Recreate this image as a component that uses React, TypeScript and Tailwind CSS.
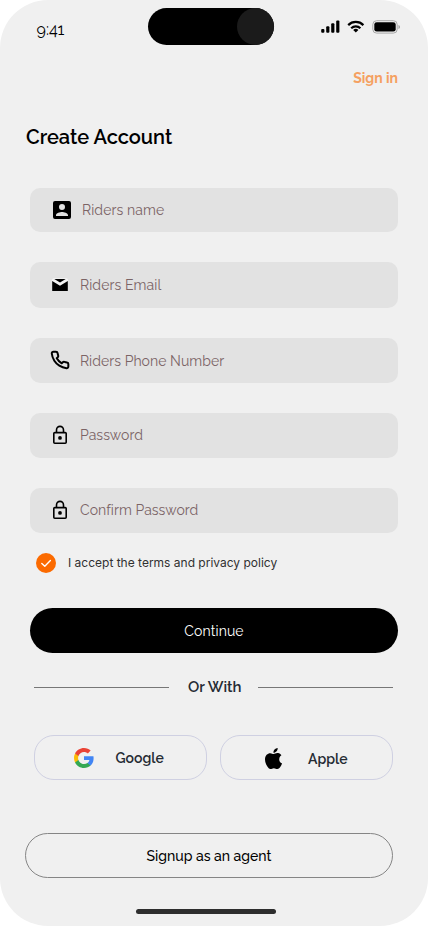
import React from "react";

type LabelProps = { children: React.ReactNode; className?: string };

function Label({ children, className = "" }: LabelProps) {
  return <span className={`block whitespace-nowrap font-['Raleway','Lato',sans-serif] ${className}`}>{children}</span>;
}

function StatusIcons() {
  return (
    <svg width="80" height="16" viewBox="0 0 80 16" fill="black">
      <rect x="0.2" y="9" width="3.2" height="3.8" rx="1" />
      <rect x="5.2" y="6.3" width="3.2" height="6.5" rx="1" />
      <rect x="10.2" y="3.3" width="3.2" height="9.5" rx="1" />
      <rect x="15.2" y="0.6" width="3.2" height="12.2" rx="1" />
      <g fill="none" stroke="black" strokeWidth="2.2">
        <path d="M27.2 5.1a10.8 10.8 0 0 1 15.2 0" />
        <path d="M30.2 8.3a6.6 6.6 0 0 1 9.2 0" />
      </g>
      <path d="M32.2 10a3.6 3.6 0 0 1 5.2 0L34.8 12.6Z" />
      <rect x="51.8" y="0.7" width="24.4" height="12.4" rx="3.8" fill="none" stroke="#a8a8a8" />
      <rect x="53.3" y="2.2" width="21.4" height="9.4" rx="2.4" />
      <path d="M77.5 5v4c.8-.3 1.4-1.1 1.4-2s-.6-1.7-1.4-2Z" fill="#9c9c9c" />
    </svg>
  );
}

function PersonIcon() {
  return (
    <svg width="24" height="24" viewBox="0 0 24 24">
      <path d="M3 5v14a2 2 0 0 0 2 2h14a2 2 0 0 0 2-2V5a2 2 0 0 0-2-2H5a2 2 0 0 0-2 2Zm12 4a3 3 0 1 1-6 0 3 3 0 0 1 6 0Zm-9 8c0-2 4-3.1 6-3.1s6 1.1 6 3.1v1H6v-1Z" />
    </svg>
  );
}

function MailIcon() {
  return (
    <svg width="20" height="20" viewBox="0 0 20 20">
      <path d="M1.9 7.5V5.2c0-1.2.9-2 2-2h12.2c1.1 0 2 .8 2 2v2.3L10 11.5Z" fill="#f4f4f4" />
      <path d="M4.3 4h11.4L10 7.4Z" />
      <path d="M2.2 6 10 10.7 17.8 6v9.9H2.2Z" />
    </svg>
  );
}

function PhoneIcon() {
  return (
    <svg className="-mt-px" width="20" height="20" viewBox="0 0 24 24" fill="none" stroke="black" strokeWidth="2.4" strokeLinecap="round" strokeLinejoin="round">
      <path d="M22 16.92v3a2 2 0 0 1-2.18 2 19.79 19.79 0 0 1-8.63-3.07 19.5 19.5 0 0 1-6-6 19.79 19.79 0 0 1-3.07-8.67A2 2 0 0 1 4.11 2h3a2 2 0 0 1 2 1.72c.13.96.36 1.9.7 2.81a2 2 0 0 1-.45 2.11L8.09 9.91a16 16 0 0 0 6 6l1.27-1.27a2 2 0 0 1 2.11-.45c.91.34 1.85.57 2.81.7A2 2 0 0 1 22 16.92Z" />
    </svg>
  );
}

function LockIcon() {
  return (
    <svg className="-mt-px" width="20" height="20" viewBox="0 0 20 20" fill="none" stroke="black" strokeWidth="1.6">
      <rect x="3.8" y="7.6" width="12.4" height="10.6" rx="1" />
      <path d="M6.5 7.6V4.9a3.5 3.5 0 0 1 7 0v2.7" />
      <circle cx="10" cy="12.9" r="1.9" fill="black" stroke="none" />
    </svg>
  );
}

function GoogleIcon() {
  return (
    <svg width="20" height="20" viewBox="2 2 44 44">
      <path fill="#4285F4" d="M45.12 24.5c0-1.56-.14-3.06-.4-4.5H24v8.51h11.84c-.51 2.75-2.06 5.08-4.39 6.64v5.52h7.11c4.16-3.83 6.56-9.47 6.56-16.17z" />
      <path fill="#34A853" d="M24 46c5.94 0 10.92-1.97 14.56-5.33l-7.11-5.52c-1.97 1.32-4.49 2.1-7.45 2.1-5.73 0-10.58-3.87-12.31-9.07H4.34v5.7C7.96 41.07 15.4 46 24 46z" />
      <path fill="#FBBC05" d="M11.69 28.18C11.25 26.86 11 25.45 11 24s.25-2.86.69-4.18v-5.7H4.34A21.99 21.99 0 0 0 2 24c0 3.55.85 6.91 2.34 9.88l7.35-5.7z" />
      <path fill="#EA4335" d="M24 10.75c3.23 0 6.13 1.11 8.41 3.29l6.31-6.31C34.91 4.18 29.93 2 24 2 15.4 2 7.96 6.93 4.34 14.12l7.35 5.7c1.73-5.2 6.58-9.07 12.31-9.07z" />
    </svg>
  );
}

function AppleIcon() {
  return (
    <svg className="mt-px" width="17" height="21" viewBox="0 0 814 1000" preserveAspectRatio="none">
      <path d="M788.1 340.9c-5.8 4.5-108.2 62.2-108.2 190.5 0 148.4 130.3 200.9 134.2 202.2-.6 3.2-20.7 71.9-68.7 141.9-42.8 61.6-87.5 123.1-155.5 123.1s-85.5-39.5-164-39.5c-76.5 0-103.7 40.8-165.9 40.8s-105.6-57-155.5-127C46.7 790.7 0 663 0 541.8c0-194.4 126.4-297.5 250.8-297.5 66.1 0 121.2 43.4 162.7 43.4 39.5 0 101.1-46 176.3-46 28.5 0 130.9 2.6 198.3 99.2zm-234-181.5c31.1-36.9 53.1-88.1 53.1-139.3 0-7.1-.6-14.3-1.9-20.1-50.6 1.9-110.8 33.7-147.1 75.8-28.5 32.4-55.1 83.6-55.1 135.5 0 7.8 1.3 15.6 1.9 18.1 3.2.6 8.4 1.3 13.6 1.3 45.4 0 102.5-30.4 135.5-71.3z" />
    </svg>
  );
}

type FieldProps = { icon: React.ReactNode; label: string; box: string; text: string };

const fields: FieldProps[] = [
  { icon: <PersonIcon />, label: "Riders name", box: "h-11 pl-5 gap-2", text: "tracking-[0.1px]" },
  { icon: <MailIcon />, label: "Riders Email", box: "h-[46px] pl-5 gap-[10px]", text: "tracking-[0.1px]" },
  { icon: <PhoneIcon />, label: "Riders Phone Number", box: "h-[45px] pl-5 gap-[10px]", text: "tracking-[0.05px]" },
  { icon: <LockIcon />, label: "Password", box: "h-[45px] pl-5 gap-[10px]", text: "-mt-px tracking-[0.05px]" },
  { icon: <LockIcon />, label: "Confirm Password", box: "h-[45px] pl-5 gap-[10px]", text: "-mt-px tracking-[0.05px]" },
];

function Field({ icon, label, box, text }: FieldProps) {
  return (
    <div className={`flex items-center rounded-[10px] bg-[#e2e2e2] ${box}`}>
      {icon}
      <Label className={`text-sm leading-5 text-[#7b6466] ${text}`}>{label}</Label>
    </div>
  );
}

export default function App() {
  return (
    <main className="h-[926px] w-[428px] overflow-hidden bg-white">
      <div className="flex h-full flex-col rounded-[48px] bg-[#f0f0f0]">
        <header className="flex h-[60px] items-start">
          <Label className="ml-[36.5px] mt-[18px] w-[111.8px] text-base leading-6">9:41</Label>
          <div className="mt-2 flex h-[37px] w-[125.4px] justify-end rounded-full bg-black">
            <div className="size-[37px] rounded-full bg-[#1b1b1b]" />
          </div>
          <div className="ml-[47.3px] mt-5"><StatusIcons /></div>
        </header>

        <div className="mr-[30px] mt-2 flex justify-end">
          <Label className="text-sm leading-5 font-bold text-[#f5a061]">Sign in</Label>
        </div>
        <h1 className="ml-[26px] mt-[34px]">
          <Label className="text-xl leading-[30px] font-semibold">Create Account</Label>
        </h1>

        <section className="mx-[30px] mt-9 flex flex-col gap-[30px]">
          {fields.map((field) => <Field key={field.label} {...field} />)}
        </section>

        <div className="ml-9 mt-5 flex h-5 items-center gap-3">
          <div className="flex size-5 items-center justify-center rounded-full bg-[#fb6a00]">
            <svg width="20" height="20" viewBox="0 0 20 20" fill="none" stroke="white" strokeWidth="1.4" strokeLinecap="round" strokeLinejoin="round"><path d="m5.8 10.4 3 2.8 5.6-5.6" /></svg>
          </div>
          <span className="whitespace-nowrap font-['Inter',sans-serif] text-xs leading-5 text-[#303030]">I accept the terms and privacy policy</span>
        </div>

        <button className="mx-[30px] mt-[35px] flex h-[45px] items-center justify-center rounded-full bg-black text-white">
          <Label className="text-sm leading-5 tracking-[0.1px]">Continue</Label>
        </button>

        <div className="ml-[34px] mr-[35px] mt-[22px] flex h-6 items-center">
          <div className="h-px w-[135px] bg-[#777]" />
          <Label className="ml-[19px] text-[15px] leading-6 font-semibold text-[#252b33]">Or With</Label>
          <div className="ml-auto h-px w-[135px] bg-[#777]" />
        </div>

        <div className="ml-[34px] mt-[36px] flex gap-[13px]">
          <button className="flex h-[45px] w-[173px] items-center rounded-[20px] border border-[#cfd0e2] pl-[39px]">
            <GoogleIcon />
            <Label className="ml-[21.5px] text-sm leading-5 font-semibold text-[#252b33]">Google</Label>
          </button>
          <button className="flex h-[45px] w-[173px] items-center rounded-[20px] border border-[#cfd0e2] pl-[44px]">
            <AppleIcon />
            <Label className="ml-[26px] mt-0.5 text-sm leading-5 font-semibold text-[#252b33]">Apple</Label>
          </button>
        </div>

        <button className="ml-[25px] mt-[53px] flex h-[45px] w-[368px] items-center justify-center rounded-full border border-[#858585]">
          <Label className="text-sm leading-5 font-medium">Signup as an agent</Label>
        </button>
        <div className="ml-[136px] mt-[31px] h-[5px] w-[140px] rounded-full bg-[#2e2e2e]" />
      </div>
    </main>
  );
}
